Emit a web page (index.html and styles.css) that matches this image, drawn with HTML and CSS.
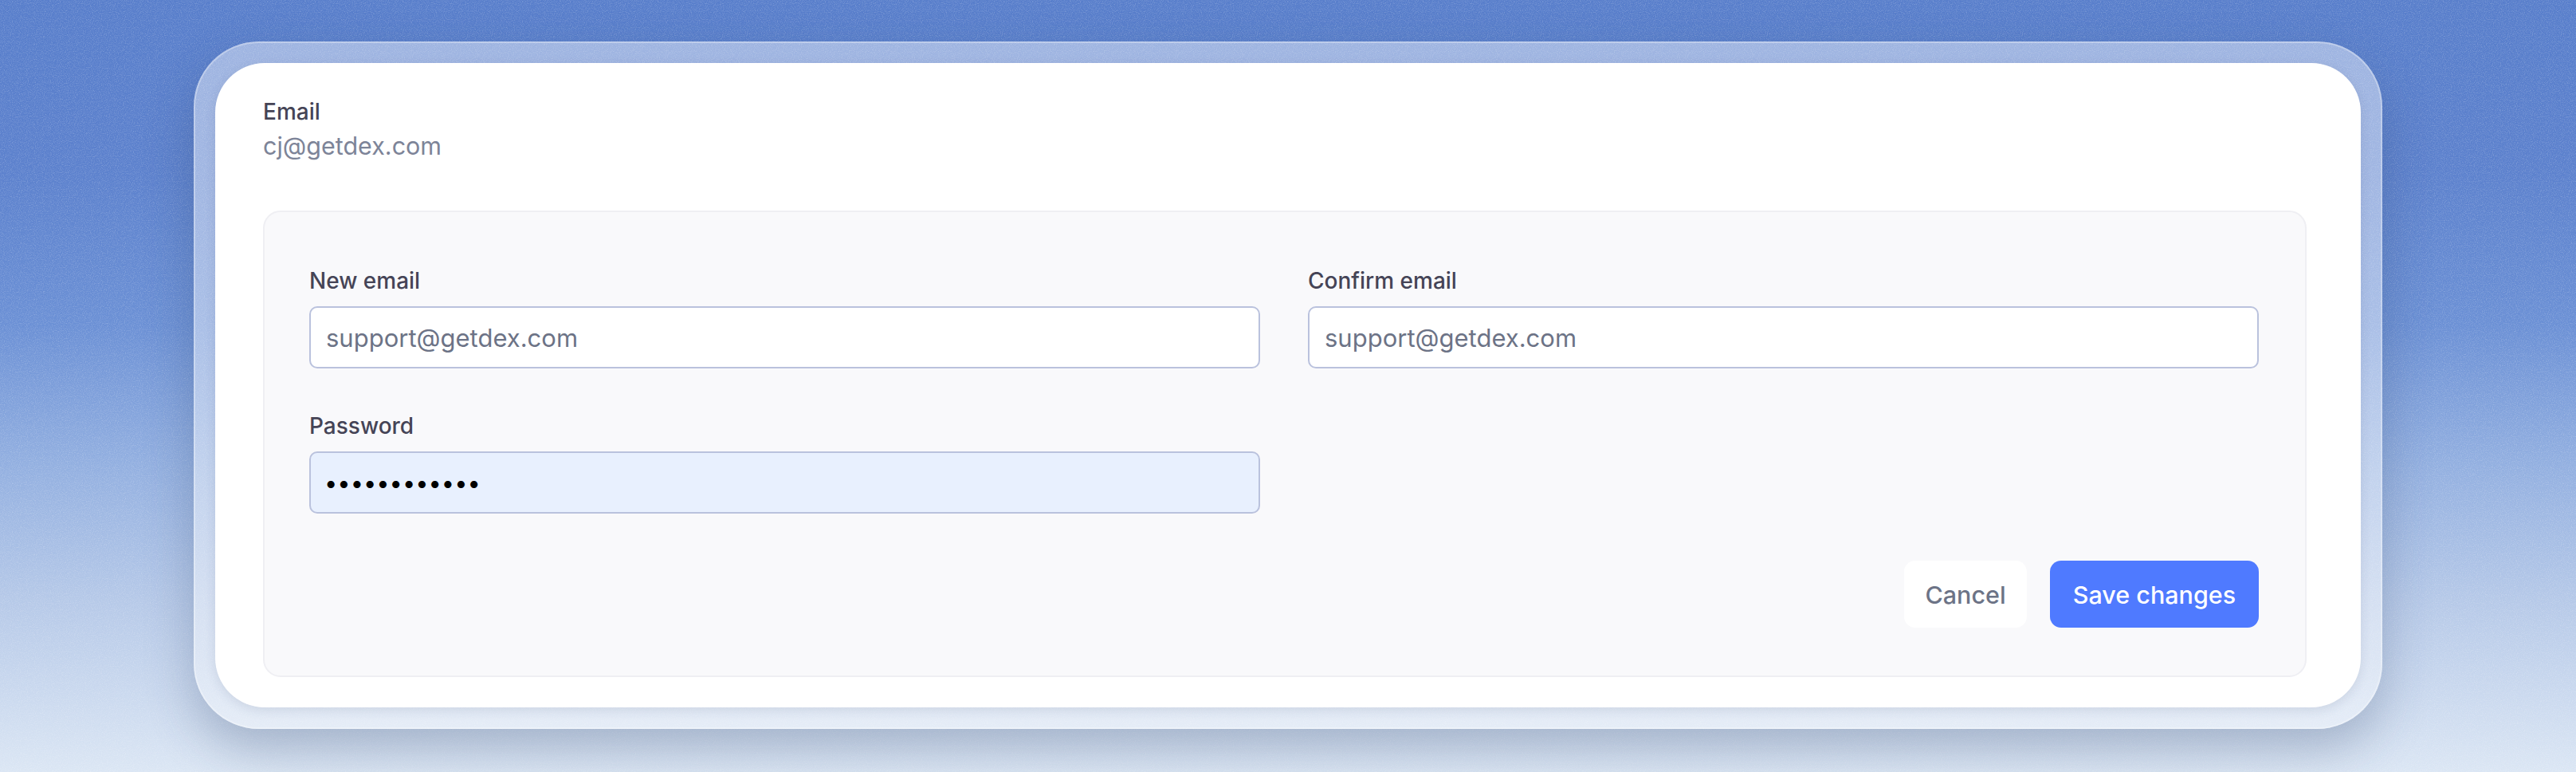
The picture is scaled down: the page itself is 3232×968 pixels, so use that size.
FILE: index.html
```html
<!DOCTYPE html>
<html lang="en">
<head>
<meta charset="utf-8">
<title>Email settings</title>
<link rel="stylesheet" href="styles.css">
</head>
<body>
  <div class="frame">
    <section class="card">
      <div class="current">
        <div class="current-label">Email</div>
        <div class="current-value">cj@getdex.com</div>
      </div>
      <form class="panel">
        <div class="fields">
          <div class="field">
            <label for="new-email">New email</label>
            <input id="new-email" type="email" value="support@getdex.com" readonly>
          </div>
          <div class="field">
            <label for="confirm-email">Confirm email</label>
            <input id="confirm-email" type="email" value="support@getdex.com" readonly>
          </div>
          <div class="field">
            <label for="password">Password</label>
            <input id="password" class="autofill" type="password" value="dexpassword1" readonly>
          </div>
        </div>
        <div class="actions">
          <button type="button" class="btn btn-cancel">Cancel</button>
          <button type="button" class="btn btn-save">Save changes</button>
        </div>
      </form>
    </section>
  </div>
</body>
</html>
```

FILE: styles.css
```css
html, body {
  margin: 0;
  padding: 0;
}

body {
  min-height: 968px;
  font-family: Inter, "Noto Sans", "Liberation Sans", sans-serif;
  background-color: #8aa8dc;
  background-image:
    url("data:image/svg+xml;utf8,<svg xmlns='http://www.w3.org/2000/svg' width='320' height='320'><filter id='n'><feTurbulence type='fractalNoise' baseFrequency='0.9' numOctaves='2' stitchTiles='stitch'/><feColorMatrix values='0 0 0 0 1  0 0 0 0 1  0 0 0 0 1  0.5 0 0 0 -0.22'/></filter><rect width='100%' height='100%' filter='url(%23n)'/></svg>"),
    linear-gradient(180deg, #587ecb 0%, #5c81cd 22%, #6b90d5 42%, #92afe0 60%, #b6c9e8 78%, #dbe6f4 100%);
  overflow: hidden;
}

.frame {
  box-sizing: border-box;
  width: 2746px;
  margin: 52px auto 0;
  padding: 27px;
  border-radius: 82px;
  background: rgba(255, 255, 255, 0.42);
  box-shadow: 0 26px 60px rgba(40, 60, 100, 0.28), inset 0 0 0 2px rgba(255, 255, 255, 0.3);
}

.card {
  background: #ffffff;
  border-radius: 62px;
  padding: 41px 68px 38px 60px;
  box-shadow: 0 4px 14px rgba(40, 60, 100, 0.12);
}

.current-label {
  font-size: 28px;
  line-height: 40px;
  font-weight: 500;
  color: #454456;
}

.current-value {
  font-size: 30.5px;
  line-height: 46px;
  color: #7d8498;
}

.panel {
  margin: 58px 0 0;
  background: #f9f9fb;
  border: 2px solid #efeff3;
  border-radius: 22px;
  padding: 66px 58px 60px 56px;
}

.fields {
  display: grid;
  grid-template-columns: 1fr 1fr;
  column-gap: 60px;
  row-gap: 52px;
}

.field label {
  display: block;
  font-size: 28px;
  line-height: 40px;
  font-weight: 500;
  color: #454456;
  margin-bottom: 12px;
}

.field input {
  display: block;
  box-sizing: border-box;
  width: 100%;
  height: 78px;
  margin: 0;
  padding: 0 19px;
  border: 2px solid #bac2dd;
  border-radius: 10px;
  background: #ffffff;
  font-family: Inter, "Noto Sans", "Liberation Sans", sans-serif;
  font-size: 31px;
  color: #6c7386;
  outline: none;
}

.field input.autofill {
  background: #e8f0fe;
  color: #000000;
  font-size: 29px;
  padding-left: 17px;
  letter-spacing: 0;
}

.actions {
  display: flex;
  justify-content: flex-end;
  gap: 29px;
  margin-top: 59px;
}

.btn {
  height: 84px;
  border: none;
  border-radius: 14px;
  font-family: Inter, "Noto Sans", "Liberation Sans", sans-serif;
  font-size: 30.5px;
  font-weight: 500;
  cursor: pointer;
}

.btn-cancel {
  width: 154px;
  background: #ffffff;
  color: #6c7386;
}

.btn-save {
  width: 262px;
  background: #4f7aff;
  color: #ffffff;
}
```
